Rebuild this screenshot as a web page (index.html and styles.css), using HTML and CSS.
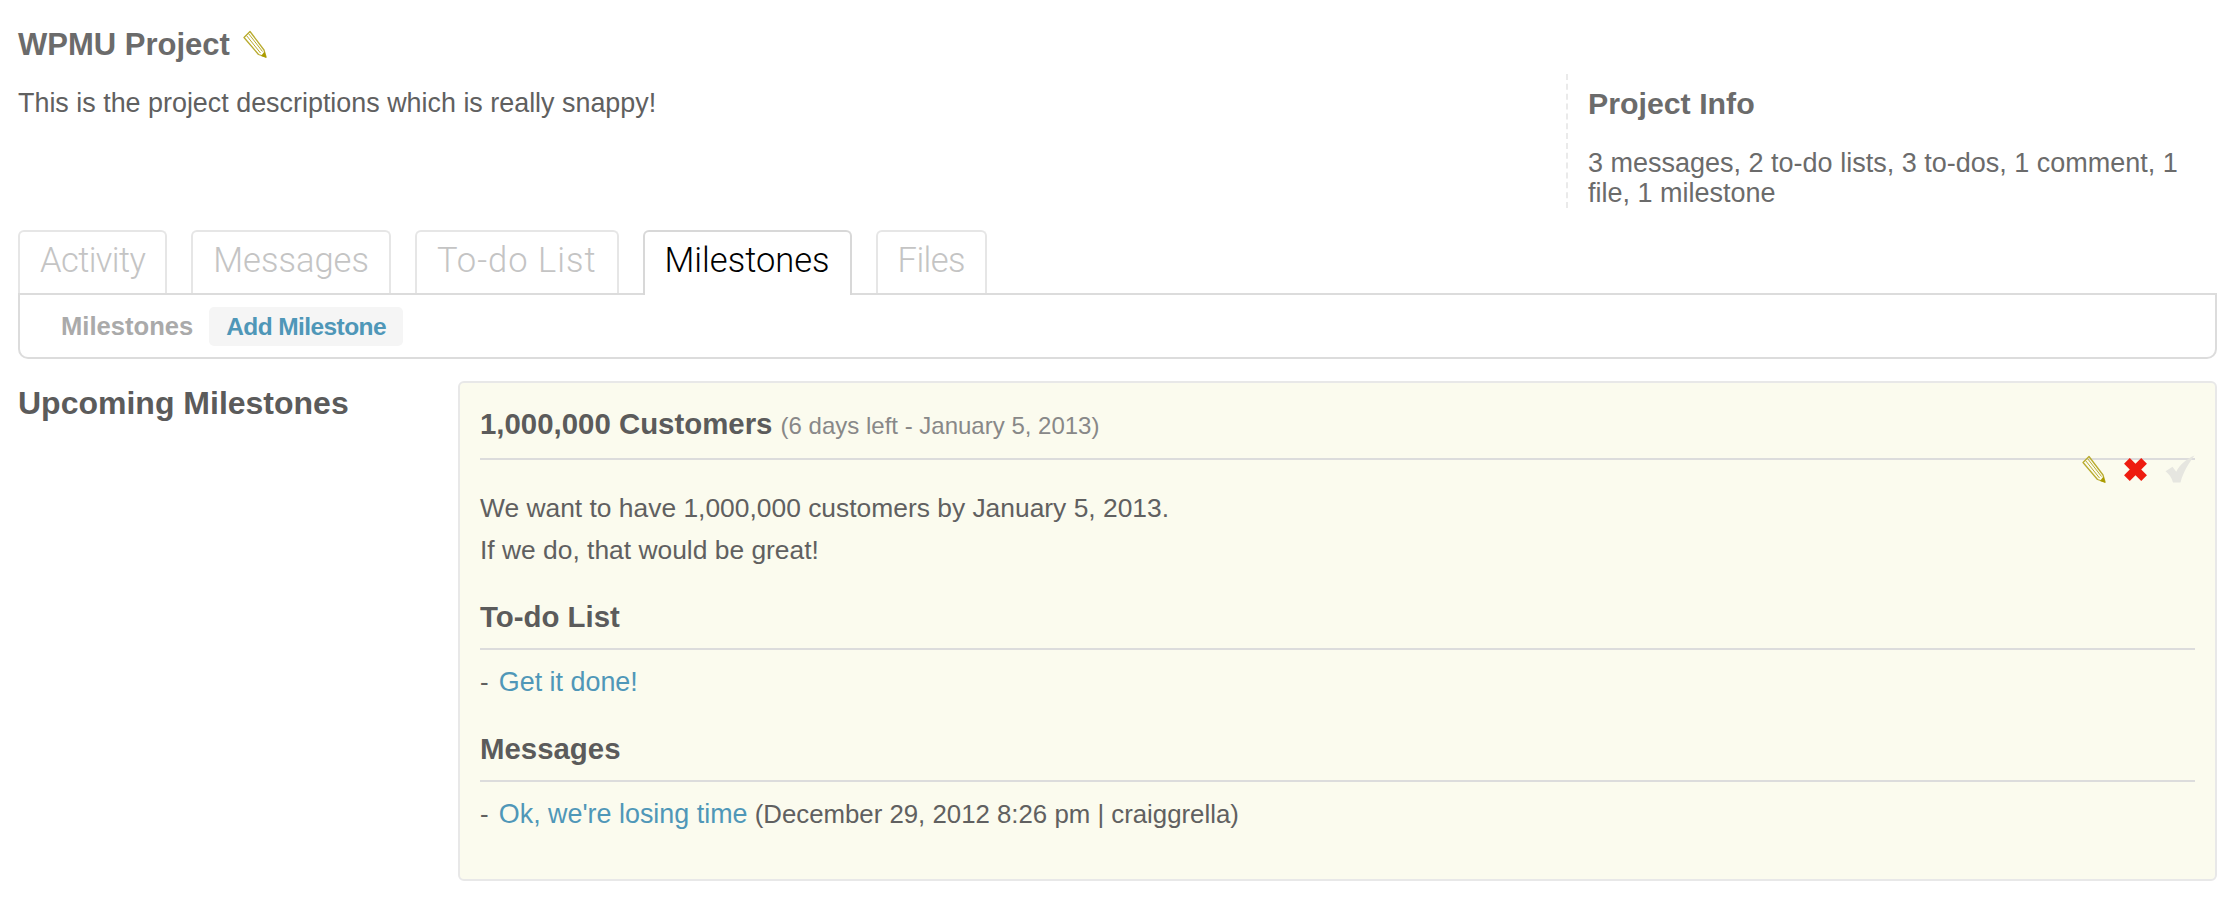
FILE: index.html
```html
<!DOCTYPE html>
<html lang="en">
<head>
    <meta charset="UTF-8">
    <title>WPMU Project</title>
    <link rel="stylesheet" href="styles.css">
</head>
<body>
    <svg class="icon-defs" width="0" height="0">
        <symbol id="icon-pencil" viewBox="0 0 24 28">
            <path d="M1 7.500 7 1.500 21 20 23 27 15.500 24.500Z" fill="none" stroke="currentColor" stroke-width="1.300" stroke-linejoin="round"/>
            <path d="M3.500 5.500 17.500 23M5.500 3.500 19.500 21.500" fill="none" stroke="currentColor" stroke-width="1"/>
            <path d="M18 26 21.500 21.500 23.500 28Z" fill="#ab9c00"/>
        </symbol>
        <symbol id="icon-cross" viewBox="0 0 24 24">
            <path d="M1 6.500 6.500 1 12 6.500 17.500 1 23 6.500 17.500 12 23 17.500 17.500 23 12 17.500 6.500 23 1 17.500 6.500 12Z" fill="currentColor"/>
        </symbol>
        <symbol id="icon-check" viewBox="0 0 28 26">
            <path d="M.5 15 7 11 10.500 15.500C14 9 20 3.500 27.500 .5 22 8 17 16 14.500 25.500L7.500 25.500C6 20.500 3.500 17.500 .5 15Z" fill="currentColor"/>
        </symbol>
    </svg>

    <div class="project-title">
        <h1>WPMU Project</h1>
        <svg class="icon-pencil"><use href="#icon-pencil"/></svg>
    </div>

    <div class="project-head">
        <p class="project-desc">This is the project descriptions which is really snappy!</p>
        <div class="project-info">
            <h2>Project Info</h2>
            <p>3 messages, 2 to-do lists, 3 to-dos, 1 comment, 1 file, 1 milestone</p>
        </div>
    </div>

    <div class="tabs">
        <a class="tab tab-tight">Activity</a>
        <a class="tab">Messages</a>
        <a class="tab tab-wide">To-do List</a>
        <a class="tab active">Milestones</a>
        <a class="tab tab-tight">Files</a>
    </div>
    <div class="sub-nav">
        <a class="sub-link">Milestones</a>
        <a class="sub-link current">Add Milestone</a>
    </div>

    <div class="milestones">
        <h2 class="section-title">Upcoming Milestones</h2>
        <div class="milestone-card">
            <h3 class="card-title">1,000,000 Customers <small>(6 days left - January 5, 2013)</small></h3>
            <div class="card-actions">
                <svg class="action-pencil"><use href="#icon-pencil"/></svg>
                <svg class="action-cross"><use href="#icon-cross"/></svg>
                <svg class="action-check"><use href="#icon-check"/></svg>
            </div>
            <div class="card-text">
                <p>We want to have 1,000,000 customers by January 5, 2013.</p>
                <p>If we do, that would be great!</p>
            </div>
            <h4>To-do List</h4>
            <p class="card-item"><span class="dash">-</span> <a href="#">Get it done!</a></p>
            <h4>Messages</h4>
            <p class="card-item"><span class="dash">-</span> <a href="#">Ok, we're losing time</a> (December 29, 2012 8:26 pm | craiggrella)</p>
        </div>
    </div>
</body>
</html>
```

FILE: styles.css
```css
body {
    margin: 0;
    padding: 0 15px 0 18px;
    font-family: "Liberation Sans", Arial, sans-serif;
    font-size: 26.4px;
    color: #606060;
    background-color: #fff;
}

h1, h2, h3, h4, p {
    margin: 0;
}

h2, h3, h4 {
    color: #5b5b5b;
}

.icon-defs {
    position: absolute;
}

.project-title {
    display: flex;
    align-items: center;
    gap: 13px;
    height: 74px;
    padding-top: 16px;
    box-sizing: border-box;
}

.project-title h1 {
    font-size: 31px;
    line-height: 58px;
    color: #6b6b6b;
}

.icon-pencil {
    width: 24px;
    height: 28px;
    margin-top: -2px;
    color: #b9ab2e;
}

.project-head {
    display: flex;
    justify-content: space-between;
    height: 134px;
}

.project-desc {
    font-size: 26.9px;
    line-height: 36px;
    margin-top: 11px;
}

.project-info {
    width: 629px;
    padding-left: 20px;
    border-left: 2px dashed #eaeaea;
    color: #6b6b6b;
}

.project-info h2 {
    font-size: 30.3px;
    line-height: 60px;
    color: #6b6b6b;
}

.project-info p {
    margin-top: 14px;
    font-size: 27px;
    line-height: 30px;
}

.tabs {
    display: flex;
    gap: 24px;
    margin-top: 22px;
}

.tab {
    height: 63px;
    box-sizing: border-box;
    padding: 0 20px;
    border: 2px solid #e6e6e6;
    border-bottom: none;
    border-radius: 6px 6px 0 0;
    font-family: Roboto, "Liberation Sans", sans-serif;
    font-weight: 300;
    font-size: 34.5px;
    line-height: 57px;
    color: #c4c4c4;
}

.tab-tight {
    letter-spacing: -0.6px;
}

.tab-wide {
    letter-spacing: 1px;
}

.tab.active {
    height: 65px;
    margin-bottom: -2px;
    border-color: #d8d8d8;
    background-color: #fff;
    color: #000;
    position: relative;
}

.sub-nav {
    display: flex;
    align-items: center;
    gap: 16px;
    height: 66px;
    box-sizing: border-box;
    padding-left: 41px;
    border: 2px solid #dcdcdc;
    border-radius: 0 0 10px 10px;
}

.sub-link {
    font-size: 25.6px;
    font-weight: bold;
    color: #aaa;
}

.sub-link.current {
    padding: 0 17px;
    font-size: 24.5px;
    letter-spacing: -0.6px;
    line-height: 39px;
    border-radius: 5px;
    background-color: #f5f5f5;
    color: #4f97b8;
}

.milestones {
    display: flex;
    margin-top: 22px;
}

.section-title {
    width: 440px;
    flex-shrink: 0;
    font-size: 32px;
    line-height: 44px;
}

.milestone-card {
    flex: 1;
    position: relative;
    height: 500px;
    box-sizing: border-box;
    padding: 0 20px;
    border: 2px solid #e8e8e8;
    border-radius: 6px;
    background-color: #fbfbee;
}

.card-title {
    height: 75px;
    line-height: 82px;
    font-size: 29.4px;
    border-bottom: 2px solid #dcdcdc;
}

.card-title small {
    font-size: 24px;
    font-weight: normal;
    color: #888;
}

.card-actions {
    position: absolute;
    top: 72px;
    right: 20px;
    display: flex;
    align-items: center;
    gap: 17px;
}

.action-pencil {
    width: 24px;
    height: 28px;
    color: #b9ab2e;
}

.action-cross {
    width: 25px;
    height: 25px;
    color: #ee1c0f;
}

.action-check {
    width: 30px;
    height: 28px;
    color: #e6e6e0;
}

.card-text {
    margin-top: 27px;
    line-height: 42px;
}

.milestone-card h4 {
    height: 63px;
    line-height: 60px;
    margin-top: 16px;
    font-size: 29.4px;
    border-bottom: 2px solid #dcdcdc;
    box-sizing: border-box;
}

.card-item {
    font-size: 25.8px;
    line-height: 42px;
    margin-top: 11px;
}

.card-item .dash {
    margin-right: 3px;
}

.card-item a {
    font-size: 26.9px;
    color: #4f97b8;
    text-decoration: none;
}
```
